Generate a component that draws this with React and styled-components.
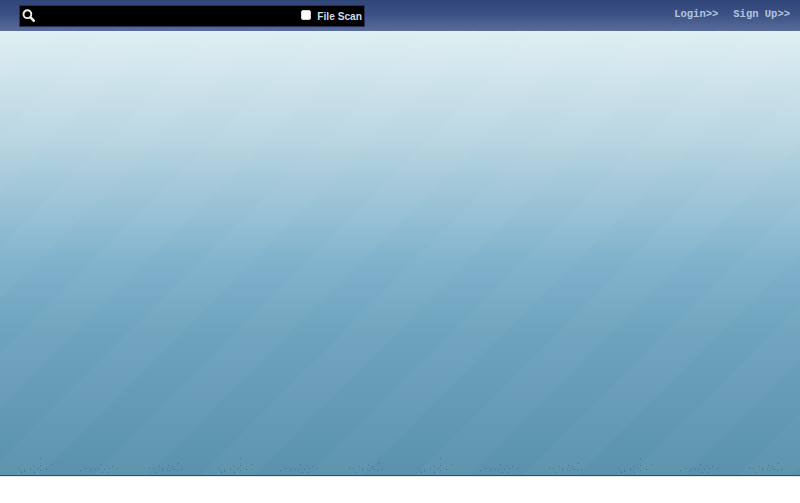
import React from "react";
import styled, { createGlobalStyle } from "styled-components";

const Global = createGlobalStyle`
  html, body { margin: 0; padding: 0; background: #fff; }
  #root { width: 800px; height: 503px; overflow: hidden; }
`;

const Page = styled.div`
  display: flex;
  flex-direction: column;
  width: 800px;
  height: 475px;
  border-bottom: 1px solid #2a5266;
  box-shadow: 0 1px 0 #e4e8ea;
`;

const Header = styled.header`
  flex: 0 0 31px;
  display: flex;
  align-items: flex-start;
  justify-content: space-between;
  box-sizing: border-box;
  padding: 5px 10px 0 19px;
  background: linear-gradient(180deg, #304679 0%, #3b5084 45%, #5a6c9a 100%);
`;

const SearchBox = styled.form`
  width: 346px;
  height: 22px;
  box-sizing: border-box;
  margin: 0;
  display: flex;
  align-items: center;
  justify-content: space-between;
  background: #000;
  border: 1px solid #26305a;
  padding: 0 2px 0 2px;
`;

const SearchIcon = styled.svg`
  width: 13px;
  height: 13px;
  margin-top: -2px;
  display: block;
`;

const ScanLabel = styled.label`
  display: flex;
  align-items: center;
  font: bold 10.2px "Liberation Sans", Arial, sans-serif;
  color: #d3dde8;
  padding-top: 1px;
`;

const ScanBox = styled.span`
  width: 10px;
  height: 10px;
  box-sizing: border-box;
  margin: -3px 6.5px 0 0;
  background: #fff;
  border-radius: 2px;
  border: 1px solid #d4d4d4;
`;

const Nav = styled.nav`
  display: flex;
  gap: 15px;
  padding-top: 3px;
`;

const NavLink = styled.a`
  font: bold 10.5px/13px "Liberation Mono", "Courier New", monospace;
  color: #b3c6de;
  text-decoration: none;
`;

const Main = styled.main`
  flex: 1;
  position: relative;
  background:
    repeating-linear-gradient(135deg,
      rgba(255,255,255,0.028) 0 38px,
      rgba(255,255,255,0) 38px 76px),
    linear-gradient(180deg, #dfeff3 0%, #b7d4e1 25%, #7fb2cc 52%, #6ea3be 68%, #5a91ac 100%);
`;

const Speckle = styled.svg`
  position: absolute;
  left: 0;
  top: 0;
  width: 800px;
  height: 444px;
  pointer-events: none;
`;

/* dot positions inside one 200px wide tile of the bottom band (three clusters) */
const bottomDots = [
  [18, 27], [20, 29], [24, 28], [24, 30], [21, 31], [30, 28], [34, 25], [38, 27], [40, 24], [40, 29],
  [34, 31], [46, 28], [52, 23], [40, 17],
  [80, 29], [85, 27], [91, 27], [90, 29], [95, 28], [98, 28], [100, 23], [102, 31], [104, 28], [107, 24],
  [108, 31], [109, 27], [112, 25], [117, 27],
  [149, 27], [153, 27], [156, 31], [159, 25], [162, 27], [162, 29], [167, 28], [168, 24], [169, 29],
  [172, 25], [172, 27], [174, 28], [177, 29], [178, 22], [181, 28],
];
const topDots = [4, 13, 53, 60, 72, 119, 126, 140, 173, 196];

function Texture() {
  return (
    <Speckle viewBox="0 0 800 444" aria-hidden="true">
      <defs>
        <pattern id="bottom" width="200" height="34" patternUnits="userSpaceOnUse" y="410">
          {bottomDots.map(([x, y]) => (
            <rect key={`${x}-${y}`} x={x} y={y} width="1" height="1" fill="#3a6488" opacity="0.75" />
          ))}
        </pattern>
        <pattern id="top" width="200" height="1" patternUnits="userSpaceOnUse">
          {topDots.map((x) => (
            <rect key={x} x={x} y="0" width="1" height="1" fill="#f6fbfc" />
          ))}
        </pattern>
      </defs>
      <rect y="410" width="800" height="34" fill="url(#bottom)" />
      <rect width="800" height="1" fill="url(#top)" />
    </Speckle>
  );
}

export default function App() {
  return (
    <>
      <Global />
      <Page>
        <Header>
          <SearchBox>
            <SearchIcon viewBox="0 0 14 14" fill="none" stroke="#eeeeea" strokeLinecap="round">
              <circle cx="5.8" cy="5.6" r="4.2" strokeWidth="2.1" />
              <path d="M9.2 9 L12.6 12.6" strokeWidth="2.8" />
            </SearchIcon>
            <ScanLabel>
              <ScanBox />
              File Scan
            </ScanLabel>
          </SearchBox>
          <Nav>
            <NavLink href="#">Login&gt;&gt;</NavLink>
            <NavLink href="#">Sign Up&gt;&gt;</NavLink>
          </Nav>
        </Header>
        <Main>
          <Texture />
        </Main>
      </Page>
    </>
  );
}
